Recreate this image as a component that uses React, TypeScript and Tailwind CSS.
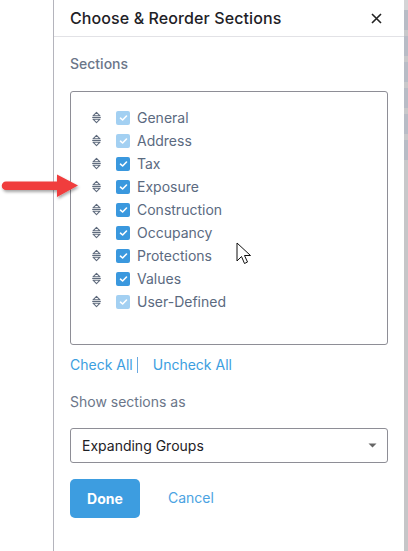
import React from "react";

const items: { label: string; disabled: boolean }[] = [
  { label: "General", disabled: true },
  { label: "Address", disabled: true },
  { label: "Tax", disabled: false },
  { label: "Exposure", disabled: false },
  { label: "Construction", disabled: false },
  { label: "Occupancy", disabled: false },
  { label: "Protections", disabled: false },
  { label: "Values", disabled: false },
  { label: "User-Defined", disabled: true },
];

function DragIcon() {
  return (
    <svg width="11" height="13" viewBox="0 0 11 13" fill="none">
      <path d="M2 4.8 L5.5 1.3 L9 4.8 Z" stroke="#5f6b7d" strokeWidth="1.1" strokeLinejoin="round" />
      <path d="M1.2 6.5 H9.8" stroke="#5f6b7d" strokeWidth="1.1" />
      <path d="M2 8.2 L5.5 11.7 L9 8.2 Z" stroke="#5f6b7d" strokeWidth="1.1" strokeLinejoin="round" />
    </svg>
  );
}

function Check({ disabled }: { disabled: boolean }) {
  return (
    <div
      className={
        "w-[14px] h-[14px] rounded-[2px] flex items-center justify-center " +
        (disabled ? "bg-[#a3d0f2]" : "bg-[#3a98de]")
      }
    >
      <svg width="9" height="8" viewBox="0 0 9 8" fill="none">
        <path d="M1.5 4.2 L3.6 6 L7.5 2" stroke="white" strokeWidth="1.6" strokeLinecap="round" strokeLinejoin="round" />
      </svg>
    </div>
  );
}

export default function App() {
  return (
    <div
      className="relative w-[408px] h-[551px] overflow-hidden bg-white flex"
      style={{ fontFamily: "Inter, 'Noto Sans', sans-serif" }}
    >
      <div className="w-[53px] shrink-0 bg-white" />
      <div className="w-[351px] shrink-0 border-l border-[#b4b4bc] bg-white flex flex-col">
        <div className="h-[37px] border-b border-[#e2e2e6] flex items-center justify-between pl-4 pr-[22px]">
          <span className="text-[16px] font-medium text-[#1e2126] tracking-[0.1px]">Choose &amp; Reorder Sections</span>
          <svg width="11" height="11" viewBox="0 0 11 11">
            <path d="M1 1 L10 10 M10 1 L1 10" stroke="#222" strokeWidth="1.6" />
          </svg>
        </div>
        <div className="pl-4 pr-[16px] flex flex-col">
          <div className="mt-[18px] text-[14px] font-medium text-[#6b7689] leading-[18px]">Sections</div>
          <div className="mt-[18px] h-[254px] border border-[#8e8e96] rounded-[3px] pt-[14px] pl-5 flex flex-col">
            {items.map((it) => (
              <div key={it.label} className="h-[23px] flex items-center">
                <div className="w-[11px] flex justify-center">
                  <DragIcon />
                </div>
                <div className="ml-[14px]">
                  <Check disabled={it.disabled} />
                </div>
                <span className="ml-[7px] text-[14px] text-[#5b6a7f]">{it.label}</span>
              </div>
            ))}
          </div>
          <div className="mt-[11px] flex items-center text-[14px] text-[#3c9ee0] leading-[18px]">
            <span>Check All</span>
            <span className="ml-[4px] w-px h-[16px] bg-[#6aa9e0]" />
            <span className="ml-[15px]">Uncheck All</span>
          </div>
          <div className="mt-[19px] text-[14px] text-[#6b7689] leading-[18px]">Show sections as</div>
          <div className="mt-[17px] h-[35px] border border-[#8e8e96] rounded-[3px] flex items-center justify-between pl-[11px] pr-[10px]">
            <span className="text-[14px] text-[#1e2126]">Expanding Groups</span>
            <svg width="9" height="5" viewBox="0 0 9 5">
              <path d="M0.5 0.5 L8.5 0.5 L4.5 4.5 Z" fill="#666" />
            </svg>
          </div>
          <div className="mt-[16px] flex items-center">
            <button className="w-[70px] h-[39px] rounded-[5px] bg-[#3d9de0] text-white text-[14px] font-bold">Done</button>
            <span className="ml-[28px] text-[14px] text-[#4ba3e2] -mt-[3px]">Cancel</span>
          </div>
        </div>
      </div>
      <div className="w-[4px] shrink-0 flex flex-col">
        <div className="h-[10px] bg-[#d4d4d6]" />
        <div className="h-[20px] bg-[#b8bcc6]" />
        <div className="h-[6px] bg-[#c8c8ca]" />
        <div className="h-[20px] bg-[#b8bcc6]" />
        <div className="h-[6px] bg-[#c8c8ca]" />
        <div className="h-[20px] bg-[#b8bcc6]" />
        <div className="h-[6px] bg-[#c8c8ca]" />
        <div className="h-[20px] bg-[#b8bcc6]" />
        <div className="h-[6px] bg-[#c8c8ca]" />
        <div className="h-[20px] bg-[#b8bcc6]" />
        <div className="h-[6px] bg-[#c8c8ca]" />
        <div className="h-[20px] bg-[#b8bcc6]" />
        <div className="h-[40px] bg-[#c8c8ca]" />
        <div className="flex-1 bg-[#c6c6c8]" />
      </div>

      {/* red annotation arrow */}
      <svg className="absolute left-0 top-[170px]" width="84" height="34" viewBox="0 0 84 34">
        <defs>
          <filter id="sh" x="-20%" y="-40%" width="140%" height="180%">
            <feDropShadow dx="1" dy="2" stdDeviation="1.5" floodColor="#000" floodOpacity="0.35" />
          </filter>
        </defs>
        <g filter="url(#sh)">
          <path d="M6 11.5 H57 V4.5 L78 15.5 L57 27 V20 H6 A4.25 4.25 0 0 1 6 11.5 Z" fill="#f03c3c" />
        </g>
      </svg>

      {/* mouse cursor */}
      <svg className="absolute left-[236px] top-[242px]" width="18" height="26" viewBox="0 0 18 26">
        <path d="M1 1 L1 19 L5.5 14.5 L8.5 21.5 L11.5 20 L8.5 13.5 L14.5 13.5 Z" fill="white" stroke="#111" strokeWidth="1" strokeLinejoin="round" />
      </svg>
    </div>
  );
}
